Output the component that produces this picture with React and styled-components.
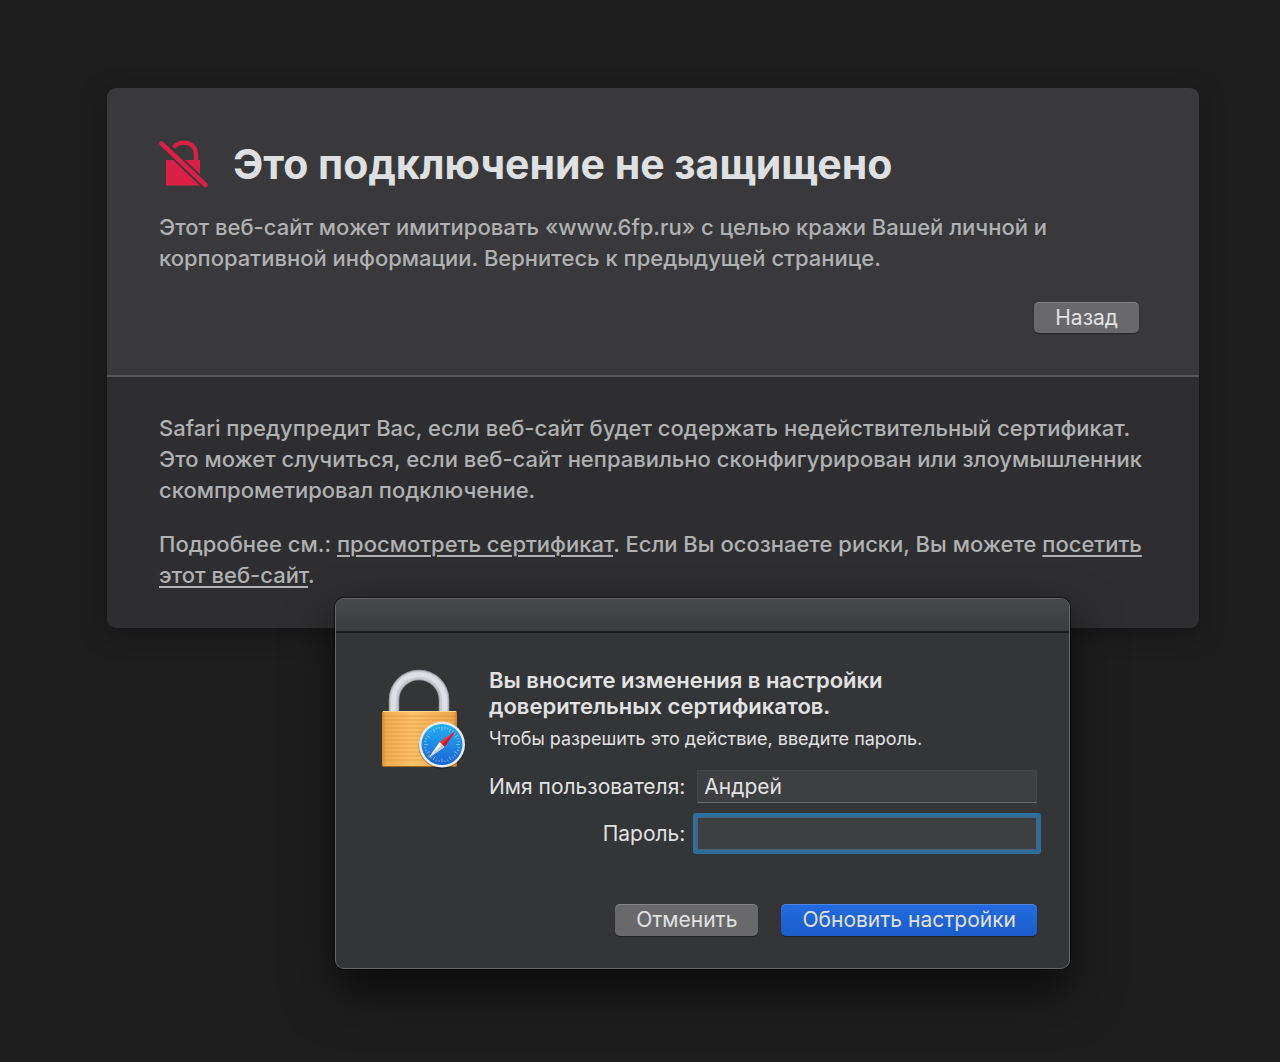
import styled, { createGlobalStyle, css } from 'styled-components';

const palette = {
  page: '#1e1e1e',
  heading: '#dfe0e1',
  text: '#b0b1b2',
  bright: '#e2e2e3',
  red: '#dc1f45',
  focus: '#2d6f9c',
};

const GlobalStyle = createGlobalStyle`
  * {
    box-sizing: border-box;
  }
  body {
    margin: 0;
    background: ${palette.page};
    font-family: Inter, 'Liberation Sans', sans-serif;
  }
`;

const Page = styled.div`
  position: relative;
  min-height: 100vh;
  padding: 88px 81px 93px 107px;
`;

const Card = styled.main`
  border-radius: 9px;
  overflow: hidden;
  box-shadow: 0 6px 26px rgba(0, 0, 0, 0.35);
`;

const Warning = styled.section`
  display: flex;
  flex-direction: column;
  padding: 52px 60px 42px 52px;
  background: #39393b;
  border-bottom: 2px solid #545556;
`;

const TitleRow = styled.div`
  display: flex;
  align-items: center;
  gap: 24px;
  height: 48px;
  margin-bottom: 24px;
`;

const Title = styled.h1`
  margin: 0;
  color: ${palette.heading};
  font-size: 41px;
  line-height: 48px;
  font-weight: 700;
  white-space: nowrap;
`;

const Text = styled.p`
  margin: 0;
  color: ${palette.text};
  font-size: 22px;
  line-height: 31px;
  font-weight: 500;

  & + & {
    margin-top: 23px;
  }
`;

const Details = styled.section`
  padding: 36px 40px 37px 52px;
  background: #2e2e30;
`;

const Link = styled.a`
  color: inherit;
  text-decoration: underline;
  text-decoration-thickness: 2px;
  text-underline-offset: 3px;
`;

const Button = styled.button`
  height: 32px;
  padding: 0 21px;
  border: none;
  border-radius: 5px;
  background: #69696b;
  box-shadow: inset 0 1px 0 rgba(255, 255, 255, 0.18),
    0 1px 1px rgba(0, 0, 0, 0.35);
  color: ${palette.bright};
  font-family: inherit;
  font-size: 21px;
  line-height: 30px;
  white-space: nowrap;

  ${props =>
    props.$primary &&
    css`
      background: linear-gradient(#226be0, #1b5dcb);
    `}
`;

const BackButton = styled(Button)`
  align-self: flex-end;
  margin-top: 28px;
  height: 31px;
`;

const Dialog = styled.div`
  position: absolute;
  top: 598px;
  left: 335px;
  width: 735px;
  border: 1px solid #656667;
  border-radius: 9px;
  overflow: hidden;
  background: #343537;
  box-shadow: 0 0 1px 1px rgba(0, 0, 0, 0.5), 0 24px 50px rgba(0, 0, 0, 0.65);
`;

const TitleBar = styled.div`
  height: 34px;
  background: linear-gradient(#48494a, #3b3c3d);
  border-bottom: 2px solid #1d1d1e;
`;

const DialogBody = styled.form`
  display: flex;
  gap: 23px;
  padding: 34px 32px 32px 44px;

  > svg {
    flex-shrink: 0;
  }
`;

const DialogContent = styled.div`
  flex: 1;
`;

const DialogTitle = styled.h2`
  margin: 0 0 8px;
  color: ${palette.bright};
  font-size: 22px;
  line-height: 26px;
  font-weight: 600;
`;

const DialogText = styled.p`
  margin: 0 0 19px;
  color: ${palette.bright};
  font-size: 18px;
  line-height: 24px;
`;

const Fields = styled.div`
  display: grid;
  grid-template-columns: auto 1fr;
  gap: 14px 12px;
  align-items: center;
`;

const Label = styled.label`
  color: ${palette.bright};
  font-size: 21px;
  line-height: 33px;
  text-align: right;
  white-space: nowrap;
`;

const Input = styled.input`
  width: 100%;
  height: 33px;
  padding: 0 6px;
  border: 1px solid #444546;
  border-bottom-color: #6b6a69;
  border-radius: 0;
  outline: none;
  background: #3e3f40;
  color: ${palette.bright};
  font-family: inherit;
  font-size: 21px;

  ${props =>
    props.$focused &&
    css`
      border-color: #48637a;
      box-shadow: 0 0 0 4px ${palette.focus};
      border-radius: 1px;
    `}
`;

const Actions = styled.div`
  display: flex;
  justify-content: flex-end;
  gap: 23px;
  margin-top: 54px;
`;

const InsecureIcon = () => (
  <svg width="50" height="48" viewBox="0 0 50 48" aria-hidden="true">
    <path
      d="M14.5 7.5C17.500 4 21 2.700 25 2.700c7 0 12 5 12 12V22"
      fill="none"
      stroke={palette.red}
      strokeWidth="4.200"
    />
    <path d="M7 20h34v25.500H7z" fill={palette.red} />
    <path d="M2.500 3.500L46.500 45" stroke="#39393b" strokeWidth="8" />
    <path
      d="M2.500 3.500L46.500 45"
      stroke={palette.red}
      strokeWidth="4.500"
      strokeLinecap="round"
    />
  </svg>
);

const ticks = Array.from({ length: 36 }, (_, i) => i * 10);

const LockIcon = () => (
  <svg width="86" height="102" viewBox="0 0 86 102" aria-hidden="true">
    <defs>
      <linearGradient id="brass" x1="0" y1="0" x2="1" y2="0">
        <stop offset="0" stopColor="#d08a37" />
        <stop offset="0.050" stopColor="#f2ab50" />
        <stop offset="0.400" stopColor="#fcc168" />
        <stop offset="0.950" stopColor="#efa64b" />
        <stop offset="1" stopColor="#c98231" />
      </linearGradient>
      <pattern id="grooves" width="4" height="4" patternUnits="userSpaceOnUse">
        <path d="M0 1h4" stroke="#cf8428" strokeOpacity="0.450" />
      </pattern>
      <linearGradient id="dial" x1="0" y1="0" x2="0" y2="1">
        <stop offset="0" stopColor="#23b0f5" />
        <stop offset="1" stopColor="#1b63d2" />
      </linearGradient>
    </defs>
    <path
      d="M14 45V33a25 25 0 0 1 50 0v12"
      fill="none"
      stroke="#9da1a7"
      strokeWidth="10.500"
    />
    <path
      d="M14 45V33a25 25 0 0 1 50 0v12"
      fill="none"
      stroke="#c6cacf"
      strokeWidth="8.500"
    />
    <path
      d="M13.500 45V33a25.500 25.500 0 0 1 51 0v12"
      fill="none"
      stroke="#dcdfe3"
      strokeWidth="5"
    />
    <rect x="2" y="44" width="75" height="56" rx="2" fill="url(#brass)" />
    <rect x="2" y="48" width="75" height="48" fill="url(#grooves)" />
    <path d="M3 44.500h73" stroke="#ffd894" />
    <path d="M3 99.500h73" stroke="#a86a22" />
    <g transform="translate(0 1.500)">
      <circle cx="62" cy="77" r="23.500" fill="#000" fillOpacity="0.250" />
      <circle cx="62" cy="76" r="23" fill="#e9ebee" />
      <circle cx="62" cy="76" r="20.500" fill="url(#dial)" />
      {ticks.map(angle => (
        <path
          key={angle}
          d={angle % 30 ? 'M62 58v2' : 'M62 58v4'}
          stroke="#bfe4ff"
          strokeOpacity="0.750"
          strokeWidth="0.700"
          transform={`rotate(${angle} 62 76)`}
        />
      ))}
      <path d="M75.500 62.500L64.500 78.500L59.500 73.500z" fill="#f0343c" />
      <path d="M75.500 62.500L64.500 78.500L62 76z" fill="#c51a26" />
      <path d="M48.500 89.500L59.500 73.500L64.500 78.500z" fill="#f4f4f5" />
      <path d="M48.500 89.500L62 76L64.500 78.500z" fill="#c5c9ce" />
    </g>
  </svg>
);

const App = () => {
  return (
    <>
      <GlobalStyle />
      <Page>
        <Card>
          <Warning>
            <TitleRow>
              <InsecureIcon />
              <Title>Это подключение не защищено</Title>
            </TitleRow>
            <Text>
              Этот веб-сайт может имитировать «www.6fp.ru» с целью кражи Вашей
              личной и корпоративной информации. Вернитесь к предыдущей
              странице.
            </Text>
            <BackButton type="button">Назад</BackButton>
          </Warning>
          <Details>
            <Text>
              Safari предупредит Вас, если веб-сайт будет содержать
              недействительный сертификат. Это может случиться, если веб-сайт
              неправильно сконфигурирован или злоумышленник скомпрометировал
              подключение.
            </Text>
            <Text>
              Подробнее см.: <Link href="#certificate">просмотреть сертификат</Link>
              . Если Вы осознаете риски, Вы можете{' '}
              <Link href="#visit">посетить этот веб-сайт</Link>.
            </Text>
          </Details>
        </Card>

        <Dialog role="dialog" aria-labelledby="dialog-title">
          <TitleBar />
          <DialogBody onSubmit={e => e.preventDefault()}>
            <LockIcon />
            <DialogContent>
              <DialogTitle id="dialog-title">
                Вы вносите изменения в настройки
                <br />
                доверительных сертификатов.
              </DialogTitle>
              <DialogText>
                Чтобы разрешить это действие, введите пароль.
              </DialogText>
              <Fields>
                <Label htmlFor="username">Имя пользователя:</Label>
                <Input id="username" name="username" defaultValue="Андрей" />
                <Label htmlFor="password">Пароль:</Label>
                <Input id="password" name="password" type="password" $focused />
              </Fields>
              <Actions>
                <Button type="button">Отменить</Button>
                <Button type="submit" $primary>
                  Обновить настройки
                </Button>
              </Actions>
            </DialogContent>
          </DialogBody>
        </Dialog>
      </Page>
    </>
  );
};

export default App;
